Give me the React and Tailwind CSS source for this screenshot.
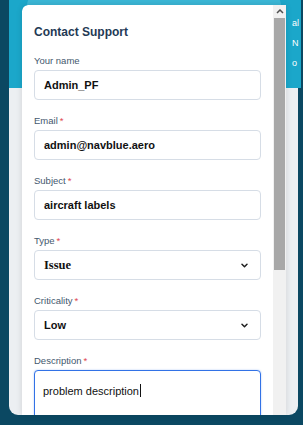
import React from "react";

const Req = () => <span className="text-[#e0484f] ml-[2px]">*</span>;

function Label({ children, req }) {
  return (
    <div className="h-[12px] text-[9.5px] leading-[12px] text-[#44586e]">
      {children}
      {req && <Req />}
    </div>
  );
}

function Chevron() {
  return (
    <svg width="7" height="5" viewBox="0 0 7 5" className="shrink-0">
      <path d="M1 1.2 L3.5 3.7 L6 1.2" fill="none" stroke="#222" strokeWidth="1.5" strokeLinecap="round" strokeLinejoin="round" />
    </svg>
  );
}

function Field({ label, req, value, select, serif }) {
  return (
    <div className="flex flex-col">
      <Label req={req}>{label}</Label>
      <div className="mt-[3px] h-[30px] rounded-[4px] border border-[#d6dde6] bg-white flex items-center pl-[9px] pr-[12px]">
        <span
          className={
            serif
              ? "flex-1 text-[12.5px] font-bold text-[#111] [font-family:'Liberation_Serif',serif]"
              : "flex-1 text-[11px] font-bold text-[#111]"
          }
        >
          {value}
        </span>
        {select && <Chevron />}
      </div>
    </div>
  );
}

export default function App() {
  return (
    <div className="w-[303px] h-[425px] bg-[#0b4862] relative overflow-hidden [font-family:'Liberation_Sans',Arial,sans-serif]">
      <div className="absolute left-[9px] top-0 w-[289px] h-[415px] rounded-b-[9px] overflow-hidden bg-[#eceff2] flex flex-col">
        <div className="h-[88px] bg-[#1ba7ca] relative">
          <div className="absolute left-[18px] top-[-10px] w-[254px] h-[90px] rounded-[16px] bg-[#3bb7d6]" />
        </div>
        <div className="flex-1" />
      </div>
      <div className="absolute left-[291px] top-0 w-[10px] h-[88px] bg-[#1ba7ca] pt-[17px] pl-[1px] flex flex-col gap-[7px] text-[9px] leading-[13px] text-white">
        <span>al</span>
        <span>N</span>
        <span>o</span>
      </div>

      <div className="absolute left-[22px] top-[5px] w-[264px] h-[410px] flex shadow-[0_0_6px_rgba(0,0,0,0.12)] rounded-tl-[6px] overflow-hidden">
        <div className="w-[251px] bg-white rounded-tl-[6px] px-[12px] pt-[19px] flex flex-col">
          <div className="h-[16px] text-[12px] leading-[16px] font-bold text-[#1f3a55]">Contact Support</div>
          <div className="mt-[15px] flex flex-col gap-[15px]">
            <Field label="Your name" value="Admin_PF" />
            <Field label="Email" req value="admin@navblue.aero" />
            <Field label="Subject" req value="aircraft labels" />
            <Field label="Type" req value="Issue" select serif />
            <Field label="Criticality" req value="Low" select />
            <div className="flex flex-col">
              <Label req>Description</Label>
              <div className="mt-[3px] h-[60px] rounded-[4px] border-[1.5px] border-[#3272e6] bg-white pl-[8px] pt-[7px] shadow-[0_0_2px_rgba(50,114,230,0.4)]">
                <span className="text-[11px] text-[#111]">problem description</span>
                <span className="inline-block w-[1px] h-[13px] bg-[#111] align-middle ml-[1px]" />
              </div>
            </div>
          </div>
        </div>
        <div className="w-[13px] bg-[#f1f1f1] flex flex-col">
          <div className="h-[13px] flex items-center justify-center">
            <svg width="8" height="5" viewBox="0 0 8 5">
              <path d="M1 4 L4 1 L7 4" fill="none" stroke="#505050" strokeWidth="1.5" />
            </svg>
          </div>
          <div className="h-[252px] mx-[1px] bg-[#a8a8a8]" />
          <div className="flex-1" />
        </div>
      </div>
    </div>
  );
}
